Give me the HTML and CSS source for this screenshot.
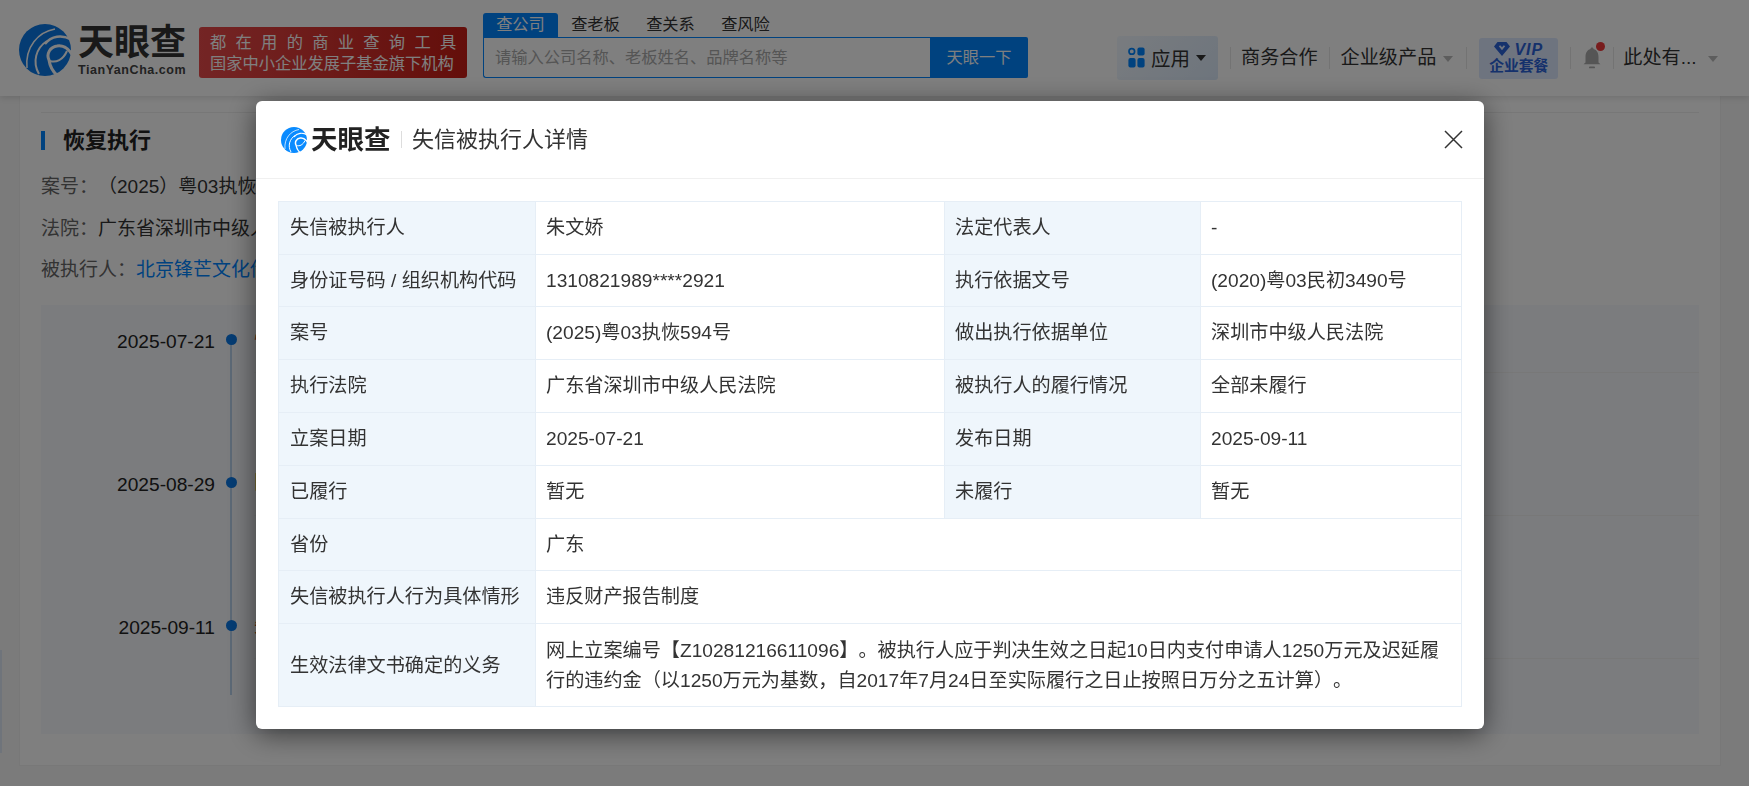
FILE: index.html
```html
<!DOCTYPE html>
<html lang="zh-CN">
<head>
<meta charset="utf-8">
<title>失信被执行人详情</title>
<link rel="stylesheet" href="styles.css">
</head>
<body>
<svg class="defs" width="0" height="0" aria-hidden="true">
  <symbol id="tyc" viewBox="0 0 52 52">
    <circle cx="26" cy="26" r="26" fill="currentColor"/>
    <path d="M36 5C19 8 6 23 8 44" fill="none" stroke="#fff" stroke-width="1.500"/>
    <path d="M28 17C17 24 13 38 20 50" fill="none" stroke="#fff" stroke-width="2"/>
    <path d="M53 16C43 10 32 12 26 20" fill="none" stroke="#fff" stroke-width="2.400"/>
    <path d="M54 32C50 25 44 21 38 22C31 23 27 30 30 36C31 43 34 48 39 52" fill="none" stroke="#fff" stroke-width="3"/>
    <path d="M31 37C37 39 44 36 48 27" fill="none" stroke="#fff" stroke-width="2"/>
  </symbol>
</svg>

<div class="page">
  <header class="topbar">
    <div class="logo">
      <svg class="logo-mark"><use href="#tyc"/></svg>
      <div class="logo-words">
        <div class="logo-cn">天眼查</div>
        <div class="logo-en">TianYanCha.com</div>
      </div>
    </div>
    <div class="slogan">
      <div class="slogan-top">都在用的商业查询工具</div>
      <div>国家中小企业发展子基金旗下机构</div>
    </div>
    <div class="search">
      <div class="search-tabs">
        <span class="search-tab is-active">查公司</span>
        <span class="search-tab">查老板</span>
        <span class="search-tab">查关系</span>
        <span class="search-tab">查风险</span>
      </div>
      <div class="search-box">
        <div class="search-input">请输入公司名称、老板姓名、品牌名称等</div>
        <div class="search-btn">天眼一下</div>
      </div>
    </div>
    <nav class="nav">
      <div class="nav-app">
        <svg class="app-icon" viewBox="0 0 17 21">
          <circle cx="3.8" cy="4.4" r="2.8" fill="none" stroke="#0084ff" stroke-width="1.7"/>
          <rect x="9.4" y="0.6" width="7.2" height="8" rx="2" fill="#0084ff"/>
          <rect x="0.4" y="11" width="7.2" height="9.4" rx="2" fill="#0084ff"/>
          <rect x="9.4" y="11" width="7.2" height="9.4" rx="2" fill="#0084ff"/>
        </svg>
        <span>应用</span>
        <i class="caret caret-dark"></i>
      </div>
      <i class="nav-sep sep-a"></i>
      <span class="nav-link">商务合作</span>
      <i class="nav-sep sep-b"></i>
      <span class="nav-link">企业级产品</span>
      <i class="caret caret-gray caret-product"></i>
      <i class="nav-sep sep-c"></i>
      <div class="vip">
        <div class="vip-top">
          <svg class="vip-gem" viewBox="0 0 16 14"><path d="M3.5 0H12.500L16 4.500L8 14L0 4.500ZM4.800 4.200L8 8.200L11.200 4.200L9.800 3.200L8 5.200L6.200 3.200Z" fill="#2a62d8" fill-rule="evenodd"/></svg>
          <span class="vip-word">VIP</span>
        </div>
        <div class="vip-label">企业套餐</div>
      </div>
      <i class="nav-sep sep-d"></i>
      <div class="bell">
        <svg class="bell-icon" viewBox="0 0 18 22">
          <path d="M9 0.500C10 0.500 10.500 1.200 10.500 2C14 3 15.500 6 15.500 10V15.500L17.500 17.200H0.500L2.500 15.500V10C2.500 6 4 3 7.500 2C7.500 1.200 8 0.500 9 0.500Z" fill="#aaa"/>
          <rect x="6" y="19.500" width="6" height="1.800" rx="0.900" fill="#aaa"/>
        </svg>
        <i class="bell-dot"></i>
      </div>
      <i class="nav-sep sep-e"></i>
      <span class="nav-link nav-user">此处有...</span>
      <i class="caret caret-gray"></i>
    </nav>
  </header>

  <main class="card">
    <div class="card-rule"></div>
    <h2 class="card-title">恢复执行</h2>
    <p class="info"><span class="info-key">案号：</span>（2025）粤03执恢594号</p>
    <p class="info"><span class="info-key">法院：</span>广东省深圳市中级人民法院</p>
    <p class="info"><span class="info-key">被执行人：</span><a class="info-link">北京锋芒文化传媒有限公司</a></p>
    <section class="panel">
      <div class="tl">
        <div class="tl-item"><span class="tl-date">2025-07-21</span></div>
        <div class="tl-item"><span class="tl-date">2025-08-29</span></div>
        <div class="tl-item"><span class="tl-date">2025-09-11</span></div>
      </div>
      <div class="tl-rows">
        <div class="tl-row tl-row-first"><span class="tag-a">恢复执行</span></div>
        <div class="tl-row"><span class="tag-b">限制消费令</span></div>
        <div class="tl-row"><span class="tag-a">失信被执行人</span></div>
      </div>
    </section>
  </main>
  <div class="edge-tab"></div>
</div>

<div class="overlay">
  <div class="modal">
    <div class="modal-head">
      <svg class="modal-mark"><use href="#tyc"/></svg>
      <span class="modal-brand">天眼查</span>
      <i class="modal-sep"></i>
      <span class="modal-title">失信被执行人详情</span>
      <svg class="modal-close" viewBox="0 0 19 19"><path d="M1 1L18 18M18 1L1 18" stroke="#333" stroke-width="1.500" fill="none"/></svg>
    </div>
    <div class="modal-body">
      <table class="detail">
        <colgroup><col class="c1"><col class="c2"><col class="c3"><col class="c4"></colgroup>
        <tr><th>失信被执行人</th><td>朱文娇</td><th>法定代表人</th><td>-</td></tr>
        <tr><th>身份证号码 / 组织机构代码</th><td>1310821989****2921</td><th>执行依据文号</th><td>(2020)粤03民初3490号</td></tr>
        <tr><th>案号</th><td>(2025)粤03执恢594号</td><th>做出执行依据单位</th><td>深圳市中级人民法院</td></tr>
        <tr><th>执行法院</th><td>广东省深圳市中级人民法院</td><th>被执行人的履行情况</th><td>全部未履行</td></tr>
        <tr class="row-5"><th>立案日期</th><td>2025-07-21</td><th>发布日期</th><td>2025-09-11</td></tr>
        <tr><th>已履行</th><td>暂无</td><th>未履行</th><td>暂无</td></tr>
        <tr class="row-7"><th>省份</th><td colspan="3">广东</td></tr>
        <tr><th>失信被执行人行为具体情形</th><td colspan="3">违反财产报告制度</td></tr>
        <tr class="row-tall"><th>生效法律文书确定的义务</th><td colspan="3">网上立案编号【Z10281216611096】。被执行人应于判决生效之日起10日内支付申请人1250万元及迟延履行的违约金（以1250万元为基数，自2017年7月24日至实际履行之日止按照日万分之五计算）。</td></tr>
      </table>
    </div>
  </div>
</div>
</body>
</html>
```

FILE: styles.css
```css
* { box-sizing: border-box; }
html, body { margin: 0; padding: 0; height: 100%; overflow: hidden; }
body {
  background: #f6f6f6;
  color: #333;
  font-family: "Liberation Sans", "Noto Sans CJK SC", sans-serif;
  font-size: 19.150px;
  text-spacing-trim: space-all;
}
i { font-style: normal; display: block; }
.defs { position: absolute; }

.page { width: 1749px; height: 786px; }

/* top bar */
.topbar {
  height: 96px;
  background: #fff;
  display: flex;
  align-items: flex-start;
  box-shadow: 0 2px 6px rgba(0, 0, 0, .12);
  position: relative;
  z-index: 1;
}
.logo { width: 199px; height: 96px; padding: 24px 0 0 19px; display: flex; flex-shrink: 0; }
.logo-mark { width: 52px; height: 52px; color: #0a78e6; flex-shrink: 0; }
.logo-words { margin-left: 7px; }
.logo-cn {
  font-size: 36px; line-height: 38px; font-weight: 700; color: #333;
  white-space: nowrap; width: 108px;
}
.logo-en {
  font-size: 12.500px; line-height: 14px; font-weight: 700; color: #444;
  letter-spacing: .55px; white-space: nowrap; margin-top: 1px;
}
.slogan {
  width: 268px; height: 51px; margin-top: 27px; padding: 5px 11px 0;
  border-radius: 3px;
  background: linear-gradient(90deg, #e84a4a, #c81d15);
  color: #fff; font-size: 16.250px; line-height: 21px; flex-shrink: 0;
  white-space: nowrap;
}
.slogan-top { letter-spacing: 9.300px; }

.search { width: 545px; margin-left: 16px; margin-top: 13px; flex-shrink: 0; }
.search-tabs { display: flex; height: 24px; }
.search-tab {
  width: 75px; height: 24px; line-height: 23px; text-align: center;
  font-size: 16.250px; color: #333; border-radius: 3px 3px 0 0;
}
.search-tab.is-active { background: #0084ff; color: #fff; }
.search-box { display: flex; height: 41px; }
.search-input {
  width: 447px; border: 1px solid #0084ff; border-right: 0; border-radius: 0 0 0 3px;
  padding-left: 11px; line-height: 39px; font-size: 16.250px; color: #aaa; background: #fff;
}
.search-btn {
  width: 98px; background: #0084ff; color: #fff; font-size: 16.250px;
  text-align: center; line-height: 41px; border-radius: 0 2px 2px 0;
}

.nav { display: flex; align-items: center; height: 44px; margin-top: 36px; margin-left: 89px; white-space: nowrap; color: #333; }
.nav-app {
  width: 101px; height: 44px; border-radius: 3px; display: flex; align-items: center;
  padding: 0 0 2px 11px; background: linear-gradient(135deg, #f2f8ff, #dceafa);
  font-size: 19.500px;
}
.app-icon { width: 17px; height: 21px; margin-right: 6px; }
.caret { width: 0; height: 0; border-left: 5px solid transparent; border-right: 5px solid transparent; margin-left: 6px; margin-top: 1px; }
.caret-dark { border-top: 6px solid #333; }
.caret-gray { border-top: 6px solid #bbb; margin-left: 7px; }
.nav-sep { width: 1px; height: 22px; background: #e6e6e6; }
.sep-a { margin-left: 12px; margin-right: 10px; }
.sep-b { margin-left: 11px; margin-right: 11px; }
.sep-c { margin-left: 13px; margin-right: 12px; }
.sep-d { margin-left: 12px; margin-right: 12px; }
.sep-e { margin-left: 12px; margin-right: 9px; }
.nav-link { line-height: 26px; }
.caret-product { margin-left: 7px; }
.vip {
  width: 79px; height: 41px; background: #dde8ff; border-radius: 3px; text-align: center; padding-top: 3px;
  color: #2a62d8;
}
.vip-top { display: flex; justify-content: center; align-items: center; height: 17px; }
.vip-gem { width: 16px; height: 14px; margin-right: 4px; }
.vip-word { font-size: 16px; line-height: 17px; font-weight: 700; font-style: italic; letter-spacing: 1px; }
.vip-label { font-size: 14.800px; line-height: 17px; font-weight: 700; }
.bell { width: 18px; height: 22px; position: relative; }
.bell-icon { width: 18px; height: 22px; display: block; }
.bell-dot { position: absolute; width: 9px; height: 9px; border-radius: 50%; background: #f0383a; right: -4px; top: -5px; }
.nav-user { width: 73px; }
.nav-user + .caret { margin-left: 12px; }

/* page behind the dialog */
.card {
  width: 1702px; height: 670px; margin-left: 19px; padding: 16px 22px 0;
  background: #fff; border: solid #f0f0f0; border-width: 0 1px 1px;
}
.card-rule { height: 1px; background: #eee; margin: 0 -1px; }
.card-title {
  margin: 18px -1px 16px; height: 19px; line-height: 19px; padding-left: 18px;
  border-left: 4px solid #0084ff; font-size: 22px; font-weight: 700; color: #222;
}
.info { margin: 0 -1px; height: 41.500px; line-height: 41.500px; white-space: nowrap; color: #333; font-size: 19px; }
.info-key { color: #666; }
.info-link { color: #0084ff; }
.panel { display: flex; margin: 14px -1px 0; height: 429px; background: #f6f8fc; }
.tl { width: 213px; flex-shrink: 0; }
.tl-item { height: 143px; position: relative; padding: 25px 39px 0 0; text-align: right; line-height: 24px; color: #222; }
.tl-item::before {
  content: ""; position: absolute; width: 11px; height: 11px; border-radius: 50%;
  background: #0a78e6; left: 185px; top: 29px; z-index: 1;
}
.tl-item::after {
  content: ""; position: absolute; width: 2px; background: #b9d2ec;
  left: 189px; top: 35px; bottom: -35px;
}
.tl-item:last-child::after { bottom: 39px; }
.tl-rows { flex: 1; }
.tl-row { height: 143px; border-bottom: 1px solid #f0f0f0; padding-top: 98px; line-height: 24px; white-space: nowrap; }
.tl-row-first { height: 68px; padding-top: 24px; }
.tag-a { color: #c8541a; }
.tag-b { color: #c8961a; }
.edge-tab { position: absolute; left: 0; top: 650px; width: 2px; height: 103px; background: #dfe9f7; }

/* dialog */
.overlay {
  position: fixed; inset: 0; z-index: 5; background: rgba(0, 0, 0, .5);
  padding: 101px 0 0 256px;
}
.modal {
  width: 1228px; height: 628px; background: #fff; border-radius: 6px;
  box-shadow: 0 5px 28px rgba(0, 0, 0, .55);
}
.modal-head {
  height: 78px; border-bottom: 1px solid #f0f0f0; display: flex; align-items: center;
  padding: 0 21px 0 25px;
}
.modal-mark { width: 26px; height: 26px; color: #0a8bff; flex-shrink: 0; }
.modal-brand { font-size: 26.500px; font-weight: 700; color: #222; margin-left: 4px; line-height: 30px; }
.modal-sep { width: 1px; height: 17px; background: #ddd; margin: 0 10px 0 10.500px; }
.modal-title { font-size: 22px; color: #333; line-height: 30px; }
.modal-close { width: 19px; height: 19px; margin-left: auto; }
.modal-body { padding: 22px 22px 0; }
.detail {
  width: 1183px; border-collapse: collapse; table-layout: fixed; font-size: 19.150px; color: #333;
}
.c1 { width: 257px; }
.c2 { width: 409px; }
.c3 { width: 256px; }
.c4 { width: 261px; }
.detail th, .detail td {
  height: 52.700px; padding: 0 10px; border: 1px solid #e6eef6; text-align: left; font-weight: 400;
  line-height: 30px; vertical-align: middle;
}
.detail th { background: #eff6fc; }
.detail th:first-child { padding-left: 11px; }
.detail .row-5 th, .detail .row-5 td { height: 53.700px; }
.detail .row-7 th, .detail .row-7 td { height: 51.700px; padding-top: 2px; }
.row-tall th, .row-tall td { height: 83px; padding-top: 2px; }
```
